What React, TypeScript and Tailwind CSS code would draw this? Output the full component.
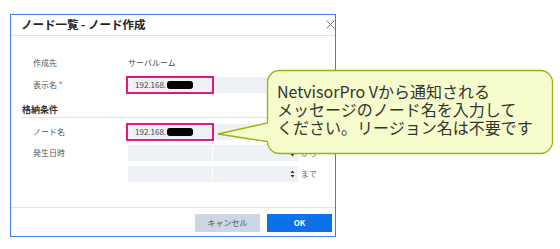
import React from "react";

const JP = { fontFamily: '"Noto Sans CJK JP", "Noto Sans", sans-serif' };

function Field({ highlight, value }: { highlight?: boolean; value?: boolean }) {
  return (
    <div className="relative flex h-[16px] w-[170px] items-center bg-[#eef1f5] pl-[7px]">
      {value && (
        <div className="flex items-center text-[8px] text-[#444]">
          192.168.
          <span className="ml-[1px] inline-block h-[8px] w-[26px] rounded-[3px] bg-black" />
        </div>
      )}
      {highlight && (
        <div className="absolute left-[-2px] top-[-1px] h-[18px] w-[88px] border-2 border-[#e2197c]" />
      )}
    </div>
  );
}

function DateRow({ label, upArrow }: { label: string; upArrow?: boolean }) {
  return (
    <div className="flex items-center">
      <div className="h-[16px] w-[84px] bg-[#eef1f5]" />
      <div className="ml-px flex h-[16px] w-[85px] items-center justify-end bg-[#eef1f5] pr-[3px]">
        <svg width="5" height="10" viewBox="0 0 5 10">
          {upArrow && <path d="M0.5 4 L2.5 1.5 L4.5 4 Z" fill="#333" />}
          <path d="M0.5 6 L2.5 8.5 L4.5 6 Z" fill="#333" />
        </svg>
      </div>
      <span className="ml-[3px] text-[8px] text-[#666]">{label}</span>
    </div>
  );
}

export default function App() {
  return (
    <div className="relative h-[249px] w-[560px] overflow-hidden bg-white" style={JP}>
      <div className="ml-[10px] pt-[14px]">
        <div className="flex h-[223px] w-[326px] flex-col border border-[#3a7bec] bg-white">
          {/* header */}
          <div className="flex h-[21px] items-center justify-between border-b border-[#e3e3e3] pl-[10px]">
            <span className="text-[11.5px] font-bold text-[#222]">ノード一覧 - ノード作成</span>
            <svg width="9" height="9" viewBox="0 0 9 9" className="mb-[1px]">
              <path d="M0.5 0.5 L8.5 8.5 M8.5 0.5 L0.5 8.5" stroke="#777" strokeWidth="1" />
            </svg>
          </div>

          {/* body */}
          <div className="flex-1 pt-[19px]">
            <div className="flex h-[16px] items-center pl-[22px]">
              <span className="w-[95px] text-[8px] text-[#555]">作成先</span>
              <span className="text-[8px] text-[#444]">サーバルーム</span>
            </div>
            <div className="mt-[5px] flex h-[18px] items-center pl-[22px]">
              <span className="w-[95px] text-[8px] text-[#555]">表示名 *</span>
              <Field highlight value />
            </div>

            <div className="mx-[10px] mt-[9px] flex h-[15px] items-center border-b border-[#e3e3e3] pl-px">
              <span className="text-[9px] font-bold text-[#333]">格納条件</span>
            </div>

            <div className="mt-[5px] flex h-[18px] items-center pl-[22px]">
              <span className="w-[95px] text-[8px] text-[#555]">ノード名</span>
              <Field highlight value />
            </div>
            <div className="mt-[4px] flex items-center pl-[22px]">
              <span className="w-[95px] text-[8px] text-[#555]">発生日時</span>
              <DateRow label="から" />
            </div>
            <div className="mt-[5px] flex items-center pl-[117px]">
              <DateRow label="まで" upArrow />
            </div>
          </div>

          {/* footer */}
          <div className="flex h-[29px] items-start justify-end gap-[7px] border-t border-[#e3e3e3] pr-[3px] pt-[6px]">
            <button className="h-[18px] w-[65px] bg-[#ccd6e5] text-[8px] text-[#555]">キャンセル</button>
            <button className="h-[18px] w-[65px] bg-[#0b72ea] text-[8px] font-bold text-white">OK</button>
          </div>
        </div>
      </div>

      {/* callout */}
      <svg className="pointer-events-none absolute left-0 top-0" width="560" height="249" viewBox="0 0 560 249">
        <path
          d="M279.5 70.5 H540.5 A12 12 0 0 1 552.5 82.5 V141.5 A12 12 0 0 1 540.5 153.5 H279.5 A12 12 0 0 1 267.5 141.5 L218 134 L267.5 123 V82.5 A12 12 0 0 1 279.5 70.5 Z"
          fill="#f6fbcb"
          stroke="#9cb30f"
          strokeWidth="1.3"
        />
      </svg>
      <div className="absolute left-[277px] top-[82px] text-[16px] leading-[18px] text-[#333]">
        <div>NetvisorPro Vから通知される</div>
        <div>メッセージのノード名を入力して</div>
        <div>ください。リージョン名は不要です</div>
      </div>
    </div>
  );
}
